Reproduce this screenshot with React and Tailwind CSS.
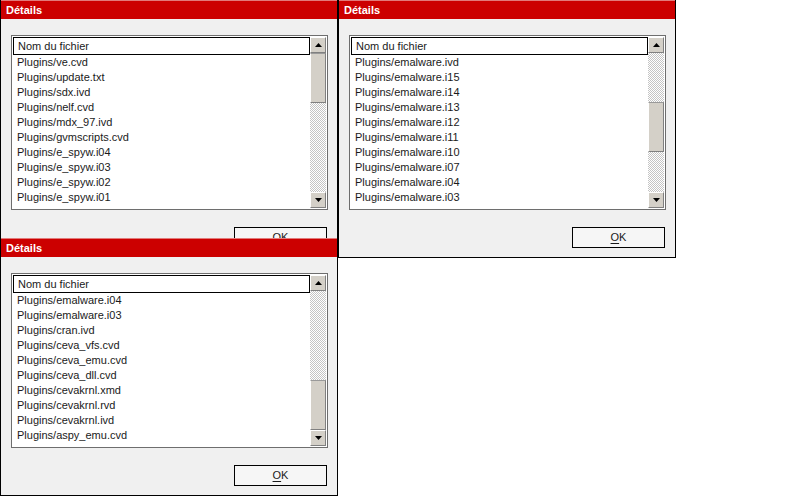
import React from "react";

const dialogs = [
  {
    pos: "left-0 top-0",
    thumb: "mt-0",
    rows: [
      "Plugins/ve.cvd",
      "Plugins/update.txt",
      "Plugins/sdx.ivd",
      "Plugins/nelf.cvd",
      "Plugins/mdx_97.ivd",
      "Plugins/gvmscripts.cvd",
      "Plugins/e_spyw.i04",
      "Plugins/e_spyw.i03",
      "Plugins/e_spyw.i02",
      "Plugins/e_spyw.i01",
    ],
  },
  {
    pos: "left-[338px] top-0",
    thumb: "mt-[49px]",
    rows: [
      "Plugins/emalware.ivd",
      "Plugins/emalware.i15",
      "Plugins/emalware.i14",
      "Plugins/emalware.i13",
      "Plugins/emalware.i12",
      "Plugins/emalware.i11",
      "Plugins/emalware.i10",
      "Plugins/emalware.i07",
      "Plugins/emalware.i04",
      "Plugins/emalware.i03",
    ],
  },
  {
    pos: "left-0 top-[238px]",
    thumb: "mt-[89px]",
    rows: [
      "Plugins/emalware.i04",
      "Plugins/emalware.i03",
      "Plugins/cran.ivd",
      "Plugins/ceva_vfs.cvd",
      "Plugins/ceva_emu.cvd",
      "Plugins/ceva_dll.cvd",
      "Plugins/cevakrnl.xmd",
      "Plugins/cevakrnl.rvd",
      "Plugins/cevakrnl.ivd",
      "Plugins/aspy_emu.cvd",
    ],
  },
];

const ArrowButton = ({ down }) => (
  <div className="h-[16px] flex items-center justify-center bg-[#d4d0c8] border-t border-l border-t-white border-l-white border-r border-b border-r-[#808080] border-b-[#808080]">
    <svg width="7" height="4" viewBox="0 0 7 4">
      {down ? (
        <polygon points="0,0 7,0 3.5,4" fill="#000" />
      ) : (
        <polygon points="3.5,0 7,4 0,4" fill="#000" />
      )}
    </svg>
  </div>
);

const Dialog = ({ pos, thumb, rows }) => (
  <div
    className={`absolute ${pos} w-[338px] h-[258px] bg-[#f0f0f0] border-x border-b border-black flex flex-col`}
  >
    <div className="h-[19px] shrink-0 bg-[#cc0000] border-t border-t-[#e27a7a] flex items-center pl-[5px] text-white text-[11px] font-bold">
      Détails
    </div>

    <div className="ml-[10px] mt-[16px] w-[317px] h-[175px] border border-[#6e6e6e] bg-white p-px flex">
      <div className="flex-1 min-w-0 flex flex-col overflow-hidden">
        <div className="h-[18px] shrink-0 border border-black flex items-center pl-[4px] text-[11px] text-[#1a1a1a]">
          Nom du fichier
        </div>
        {rows.map((r) => (
          <div
            key={r}
            className="h-[15px] shrink-0 leading-[15px] pl-[4px] text-[11px] text-[#1a1a1a] whitespace-nowrap"
          >
            {r}
          </div>
        ))}
      </div>

      <div className="w-[16px] flex flex-col">
        <ArrowButton />
        <div className="flex-1 flex flex-col bg-[repeating-conic-gradient(#c4c4c4_0_25%,#ffffff_0_50%)] bg-size-[2px_2px]">
          <div
            className={`${thumb} h-[50px] bg-[#d4d0c8] border-t border-l border-t-[#9a9a9a] border-l-white border-r border-b border-r-[#808080] border-b-[#808080]`}
          />
        </div>
        <ArrowButton down />
      </div>
    </div>

    <div className="flex justify-end mr-[10px] mt-[17px]">
      <button className="w-[93px] h-[21px] border border-black bg-[#f6f6f6] text-[11px] text-[#1a1a1a] flex items-center justify-center">
        <span className="underline underline-offset-2">O</span>K
      </button>
    </div>
  </div>
);

export default function App() {
  return (
    <div
      className="relative w-[787px] h-[497px] bg-white overflow-hidden"
      style={{ fontFamily: '"Liberation Sans", Arial, sans-serif' }}
    >
      {dialogs.map((d, i) => (
        <Dialog key={i} {...d} />
      ))}
    </div>
  );
}
